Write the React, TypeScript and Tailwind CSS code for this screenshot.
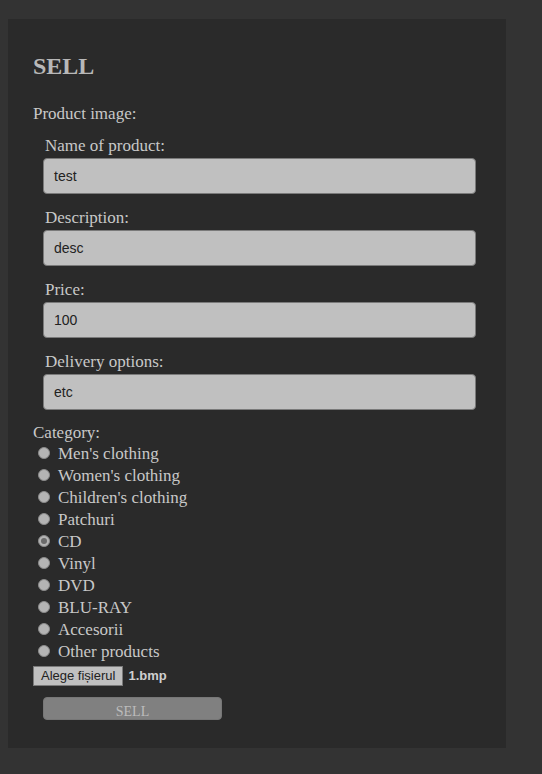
const fields = [
  { label: 'Name of product:', value: 'test' },
  { label: 'Description:', value: 'desc' },
  { label: 'Price:', value: '100' },
  { label: 'Delivery options:', value: 'etc' },
];

const categories = [
  "Men's clothing",
  "Women's clothing",
  "Children's clothing",
  'Patchuri',
  'CD',
  'Vinyl',
  'DVD',
  'BLU-RAY',
  'Accesorii',
  'Other products',
];

const serif = "font-['Liberation_Serif',serif]";
const sans = "font-['Liberation_Sans',Arial,sans-serif]";

function Radio({ checked }: { checked: boolean }) {
  return (
    <span className="w-[12px] h-[12px] rounded-full bg-[#b4b4b4] border border-[#8a8a8a] flex items-center justify-center mt-[-2px]">
      {checked && <span className="w-[6px] h-[6px] rounded-full bg-[#6a6a6a]" />}
    </span>
  );
}

export default function App() {
  return (
    <div className={`min-h-screen bg-[#333333] pt-[19px] pl-[8px] ${serif}`}>
      <div className="w-[498px] h-[729px] bg-[#2a2a2a] pl-[25px] pt-[33px] text-[#c8c8c8]">
        <h2 className="text-[24px] leading-[28px] font-bold text-[#b8b8b8]">SELL</h2>

        <div className="mt-[24px] text-[17px] leading-[20px]">Product image:</div>

        {fields.map((f, i) => (
          <div key={f.label} className={i === 0 ? 'mt-[9px]' : 'mt-[11px]'}>
            <div className="pt-[3px] pl-[12px] text-[17px] leading-[20px]">{f.label}</div>
            <div
              className={`mt-[2px] ml-[10px] w-[433px] h-[36px] rounded-[4px] bg-[#c0c0c0] border border-[#7a7a7a] pl-[10px] flex items-center text-[14px] text-[#222] ${sans}`}
            >
              {f.value}
            </div>
          </div>
        ))}

        <div className="mt-[13px] text-[17px] leading-[20px]">Category:</div>
        <div className="flex flex-col">
          {categories.map((c) => (
            <label key={c} className="h-[22px] flex items-center gap-[8px] pl-[5px] text-[17px] leading-[22px]">
              <Radio checked={c === 'CD'} />
              <span>{c}</span>
            </label>
          ))}
        </div>

        <div className={`mt-[3px] flex items-center gap-[5px] text-[13px] ${sans}`}>
          <span className="h-[20px] px-[7px] flex items-center bg-[#c0c0c0] border border-[#7a7a7a] text-[#222]">
            Alege fișierul
          </span>
          <span className="font-bold text-[#cfcfcf]">1.bmp</span>
        </div>

        <button className="mt-[11px] ml-[10px] w-[179px] h-[23px] rounded-[4px] bg-[#808080] border border-[#777] text-[14px] text-[#bcbcbc] pt-[5px] leading-[17px]">
          SELL
        </button>
      </div>
    </div>
  );
}
